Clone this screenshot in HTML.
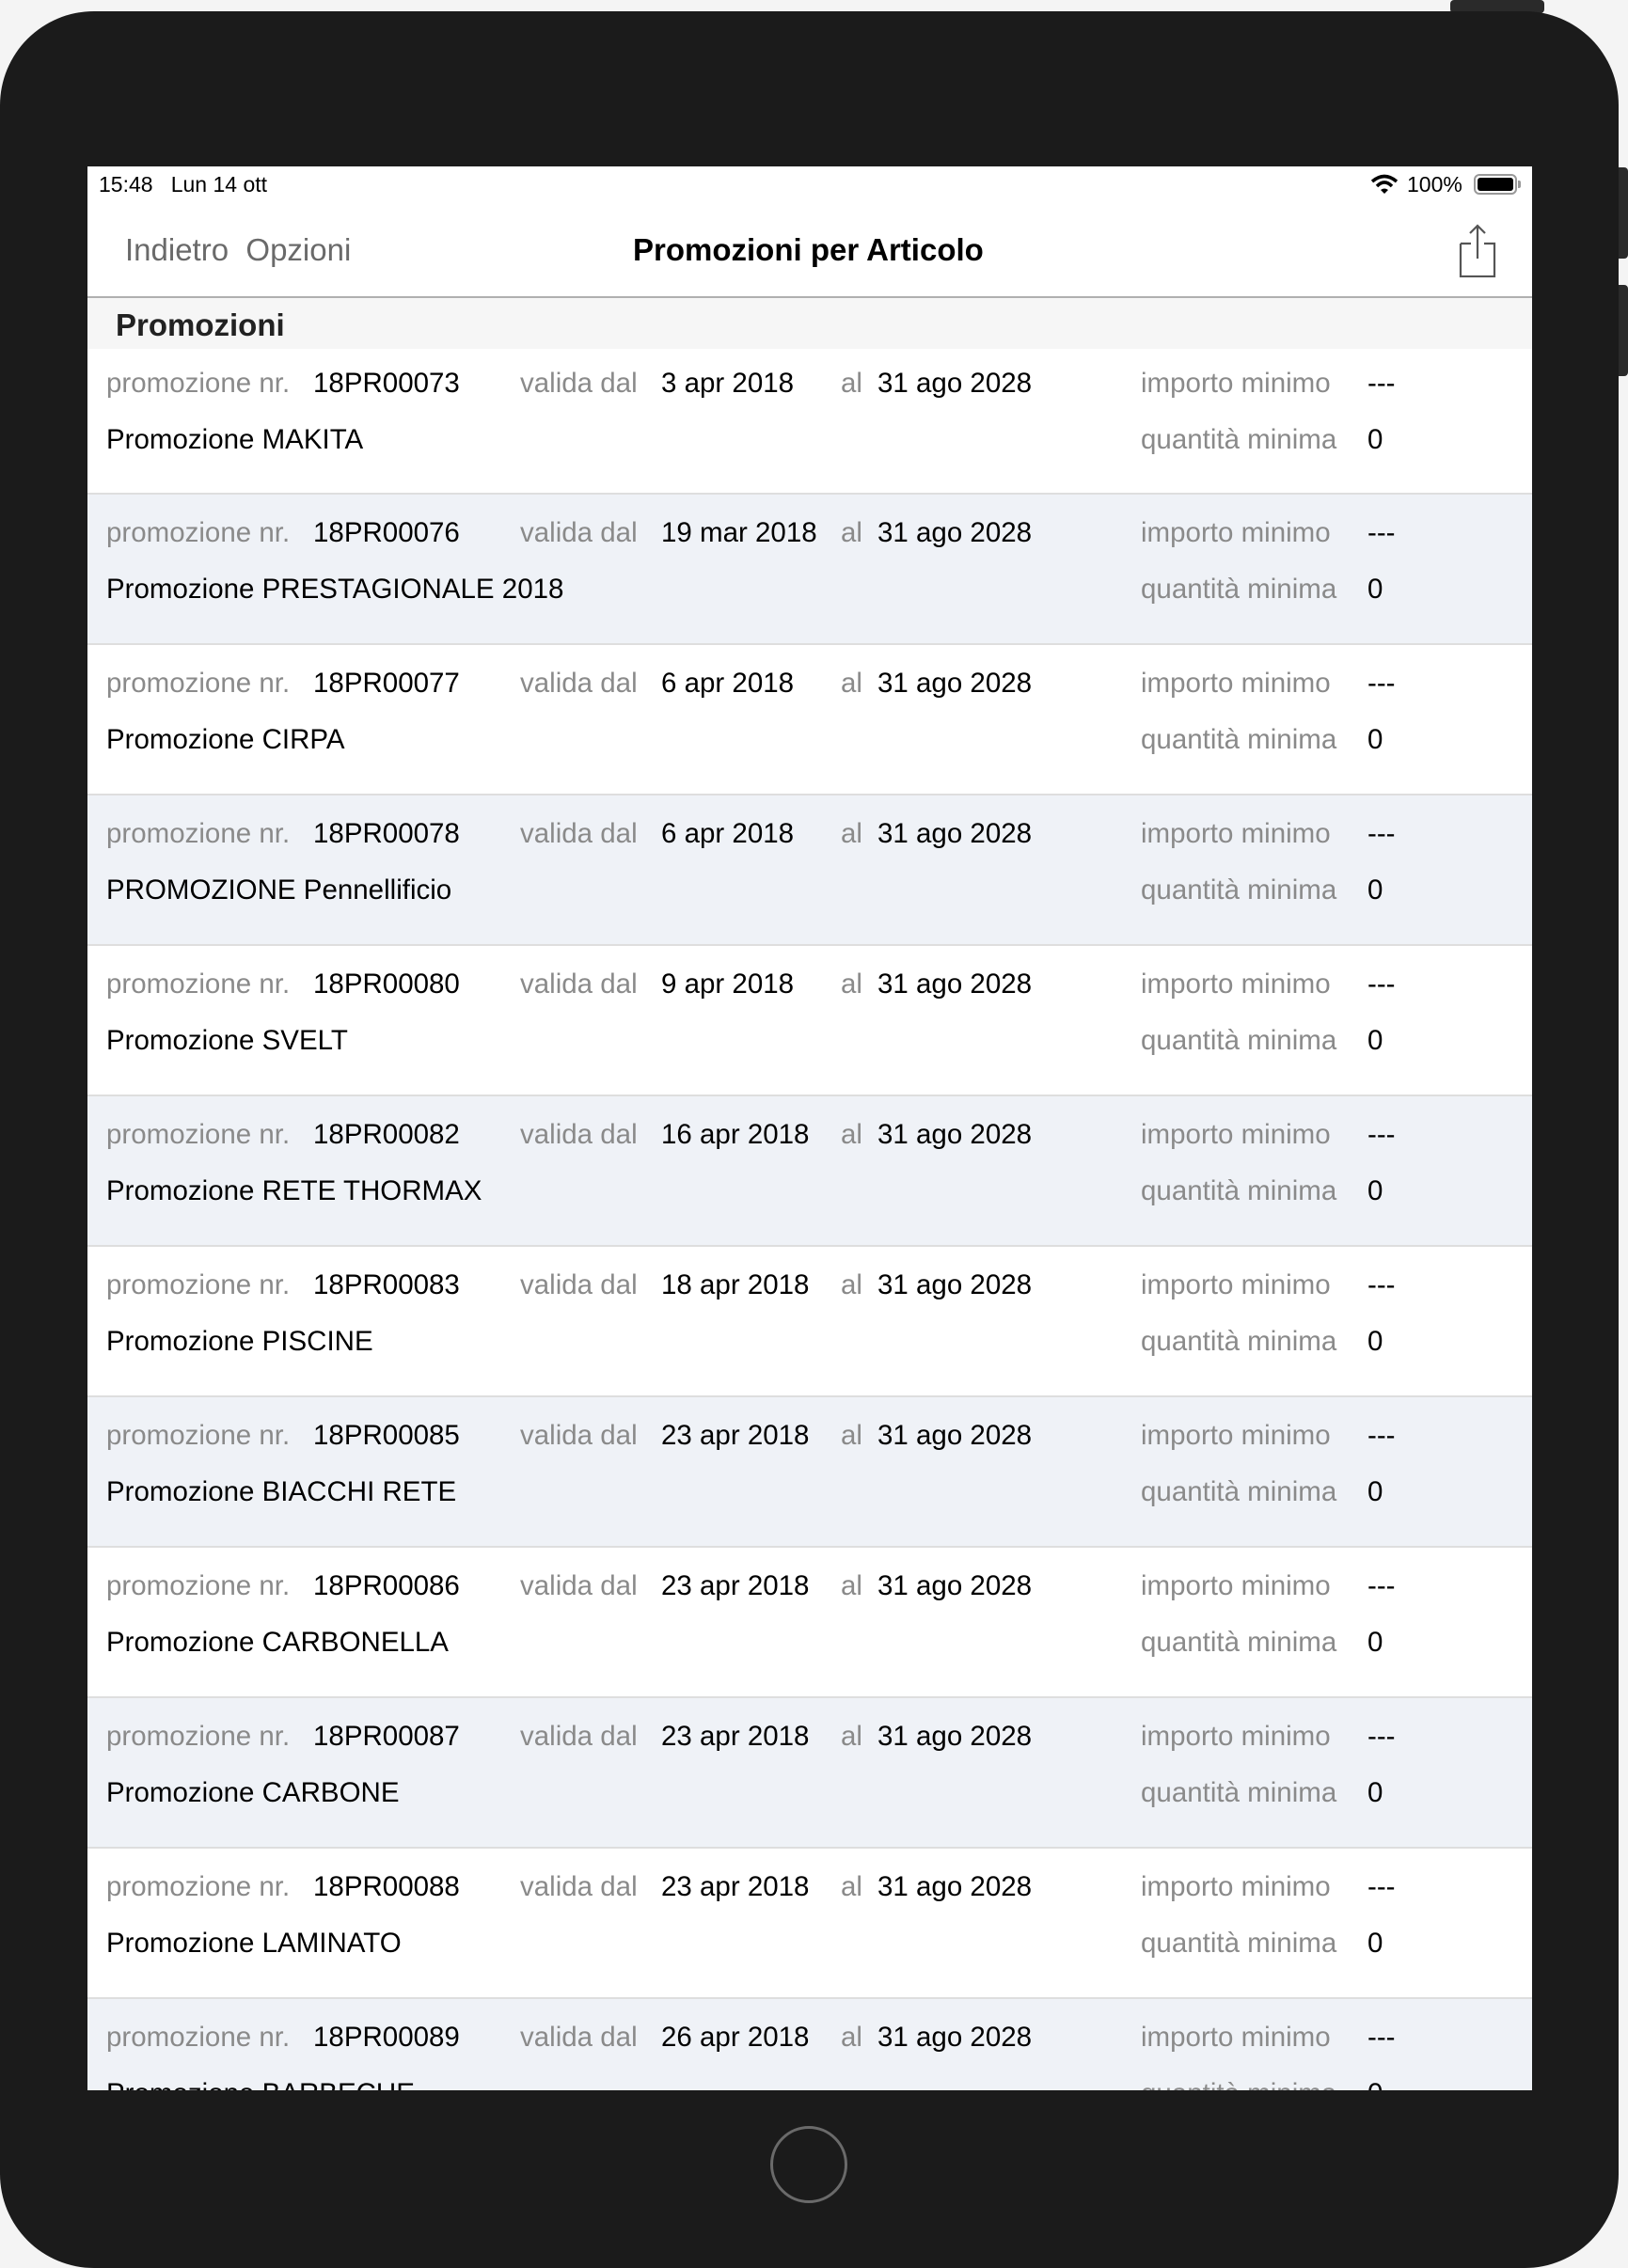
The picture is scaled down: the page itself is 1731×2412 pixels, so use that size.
<!DOCTYPE html>
<html><head><meta charset="utf-8"><style>
*{margin:0;padding:0;box-sizing:border-box}
html,body{width:1731px;height:2388px;overflow:hidden;background:#f4f4f4;font-family:"Liberation Sans",sans-serif}
.dev{position:absolute;left:0;top:12px;width:1721px;height:2400px;background:#1b1b1b;border-radius:100px}
.btn{position:absolute;background:#2a2a2a;border-radius:4px}
.scr{position:absolute;left:93px;top:177px;width:1536px;height:2046px;background:#fff;overflow:hidden}
.a{position:absolute;white-space:nowrap;line-height:1}
.row{position:absolute;left:0;width:1536px;height:160px;border-bottom:2px solid #dedede;background:#fff}
.row.e{background:#eff2f7}
.row.f{height:155px}
.t{font-size:29.5px;position:absolute;white-space:nowrap;line-height:1;color:#000}
.g{color:#8a8a8a}
.l1{top:26px}.l2{top:86px}
.f .l1{top:22px}.f .l2{top:82px}
.c1{left:20px}.c2{left:240px}.c3{left:460px}.c4{left:610px}.c5{left:801px}.c6{left:840px}.c7{left:1120px}.c8{left:1361px}
</style></head><body>
<div class="btn" style="left:1542px;top:0;width:100px;height:14px"></div>
<div class="btn" style="left:1715px;top:178px;width:16px;height:97px"></div>
<div class="btn" style="left:1715px;top:303px;width:16px;height:97px"></div>
<div class="dev"></div>
<div style="position:absolute;left:819px;top:2261px;width:82px;height:82px;border:3px solid #6a6a6a;border-radius:50%"></div>
<div class="scr">
 <div class="a" style="left:12px;top:8px;font-size:23px;color:#000">15:48&nbsp;&nbsp;&nbsp;Lun 14 ott</div>
 <svg style="position:absolute;left:1364px;top:8px" width="30" height="22" viewBox="0 0 30 22"><path d="M2 8 Q15 -3 28 8" stroke="#000" stroke-width="3.5" fill="none"/><path d="M7 13 Q15 5 23 13" stroke="#000" stroke-width="3.5" fill="none"/><path d="M11 17 L15 21 L19 17 Q15 14 11 17Z" fill="#000"/></svg>
 <div class="a" style="left:1403px;top:8px;font-size:23px;color:#000">100%</div>
 <div style="position:absolute;left:1474px;top:8px;width:46px;height:22px;border:2px solid #999;border-radius:6px;padding:2px"><div style="width:100%;height:100%;background:#000;border-radius:3px"></div></div>
 <div style="position:absolute;left:1521px;top:15px;width:3px;height:8px;background:#999;border-radius:0 2px 2px 0"></div>
 <div class="a" style="left:40px;top:72px;font-size:33px;color:#6a6a6a">Indietro&nbsp;&nbsp;Opzioni</div>
 <div class="a" style="left:580px;top:72px;font-size:33px;font-weight:bold;color:#000">Promozioni per Articolo</div>
 <svg style="position:absolute;left:1457px;top:60px" width="42" height="58" viewBox="0 0 42 58"><path d="M3 22 H14 M28 22 H39 V57 H3 V22" stroke="#555" stroke-width="2.2" fill="none"/><path d="M21 3 V38 M13 11 L21 3 L29 11" stroke="#555" stroke-width="2.2" fill="none"/></svg>
 <div style="position:absolute;left:0;top:138px;width:1536px;height:57px;background:#f6f6f6;border-top:2px solid #b0b0b0"></div>
 <div class="a" style="left:30px;top:152px;font-size:33px;font-weight:bold;color:#222">Promozioni</div>

 <div class="row f" style="top:194px"><div class="t g l1 c1">promozione nr.</div><div class="t l1 c2">18PR00073</div><div class="t g l1 c3">valida dal</div><div class="t l1 c4">3 apr 2018</div><div class="t g l1 c5">al</div><div class="t l1 c6">31 ago 2028</div><div class="t g l1 c7">importo minimo</div><div class="t l1 c8">---</div><div class="t l2 c1">Promozione MAKITA</div><div class="t g l2 c7">quantità minima</div><div class="t l2 c8">0</div></div>
 <div class="row e" style="top:349px"><div class="t g l1 c1">promozione nr.</div><div class="t l1 c2">18PR00076</div><div class="t g l1 c3">valida dal</div><div class="t l1 c4">19 mar 2018</div><div class="t g l1 c5">al</div><div class="t l1 c6">31 ago 2028</div><div class="t g l1 c7">importo minimo</div><div class="t l1 c8">---</div><div class="t l2 c1">Promozione PRESTAGIONALE 2018</div><div class="t g l2 c7">quantità minima</div><div class="t l2 c8">0</div></div>
 <div class="row" style="top:509px"><div class="t g l1 c1">promozione nr.</div><div class="t l1 c2">18PR00077</div><div class="t g l1 c3">valida dal</div><div class="t l1 c4">6 apr 2018</div><div class="t g l1 c5">al</div><div class="t l1 c6">31 ago 2028</div><div class="t g l1 c7">importo minimo</div><div class="t l1 c8">---</div><div class="t l2 c1">Promozione CIRPA</div><div class="t g l2 c7">quantità minima</div><div class="t l2 c8">0</div></div>
 <div class="row e" style="top:669px"><div class="t g l1 c1">promozione nr.</div><div class="t l1 c2">18PR00078</div><div class="t g l1 c3">valida dal</div><div class="t l1 c4">6 apr 2018</div><div class="t g l1 c5">al</div><div class="t l1 c6">31 ago 2028</div><div class="t g l1 c7">importo minimo</div><div class="t l1 c8">---</div><div class="t l2 c1">PROMOZIONE Pennellificio</div><div class="t g l2 c7">quantità minima</div><div class="t l2 c8">0</div></div>
 <div class="row" style="top:829px"><div class="t g l1 c1">promozione nr.</div><div class="t l1 c2">18PR00080</div><div class="t g l1 c3">valida dal</div><div class="t l1 c4">9 apr 2018</div><div class="t g l1 c5">al</div><div class="t l1 c6">31 ago 2028</div><div class="t g l1 c7">importo minimo</div><div class="t l1 c8">---</div><div class="t l2 c1">Promozione SVELT</div><div class="t g l2 c7">quantità minima</div><div class="t l2 c8">0</div></div>
 <div class="row e" style="top:989px"><div class="t g l1 c1">promozione nr.</div><div class="t l1 c2">18PR00082</div><div class="t g l1 c3">valida dal</div><div class="t l1 c4">16 apr 2018</div><div class="t g l1 c5">al</div><div class="t l1 c6">31 ago 2028</div><div class="t g l1 c7">importo minimo</div><div class="t l1 c8">---</div><div class="t l2 c1">Promozione RETE THORMAX</div><div class="t g l2 c7">quantità minima</div><div class="t l2 c8">0</div></div>
 <div class="row" style="top:1149px"><div class="t g l1 c1">promozione nr.</div><div class="t l1 c2">18PR00083</div><div class="t g l1 c3">valida dal</div><div class="t l1 c4">18 apr 2018</div><div class="t g l1 c5">al</div><div class="t l1 c6">31 ago 2028</div><div class="t g l1 c7">importo minimo</div><div class="t l1 c8">---</div><div class="t l2 c1">Promozione PISCINE</div><div class="t g l2 c7">quantità minima</div><div class="t l2 c8">0</div></div>
 <div class="row e" style="top:1309px"><div class="t g l1 c1">promozione nr.</div><div class="t l1 c2">18PR00085</div><div class="t g l1 c3">valida dal</div><div class="t l1 c4">23 apr 2018</div><div class="t g l1 c5">al</div><div class="t l1 c6">31 ago 2028</div><div class="t g l1 c7">importo minimo</div><div class="t l1 c8">---</div><div class="t l2 c1">Promozione BIACCHI RETE</div><div class="t g l2 c7">quantità minima</div><div class="t l2 c8">0</div></div>
 <div class="row" style="top:1469px"><div class="t g l1 c1">promozione nr.</div><div class="t l1 c2">18PR00086</div><div class="t g l1 c3">valida dal</div><div class="t l1 c4">23 apr 2018</div><div class="t g l1 c5">al</div><div class="t l1 c6">31 ago 2028</div><div class="t g l1 c7">importo minimo</div><div class="t l1 c8">---</div><div class="t l2 c1">Promozione CARBONELLA</div><div class="t g l2 c7">quantità minima</div><div class="t l2 c8">0</div></div>
 <div class="row e" style="top:1629px"><div class="t g l1 c1">promozione nr.</div><div class="t l1 c2">18PR00087</div><div class="t g l1 c3">valida dal</div><div class="t l1 c4">23 apr 2018</div><div class="t g l1 c5">al</div><div class="t l1 c6">31 ago 2028</div><div class="t g l1 c7">importo minimo</div><div class="t l1 c8">---</div><div class="t l2 c1">Promozione CARBONE</div><div class="t g l2 c7">quantità minima</div><div class="t l2 c8">0</div></div>
 <div class="row" style="top:1789px"><div class="t g l1 c1">promozione nr.</div><div class="t l1 c2">18PR00088</div><div class="t g l1 c3">valida dal</div><div class="t l1 c4">23 apr 2018</div><div class="t g l1 c5">al</div><div class="t l1 c6">31 ago 2028</div><div class="t g l1 c7">importo minimo</div><div class="t l1 c8">---</div><div class="t l2 c1">Promozione LAMINATO</div><div class="t g l2 c7">quantità minima</div><div class="t l2 c8">0</div></div>
 <div class="row e" style="top:1949px"><div class="t g l1 c1">promozione nr.</div><div class="t l1 c2">18PR00089</div><div class="t g l1 c3">valida dal</div><div class="t l1 c4">26 apr 2018</div><div class="t g l1 c5">al</div><div class="t l1 c6">31 ago 2028</div><div class="t g l1 c7">importo minimo</div><div class="t l1 c8">---</div><div class="t l2 c1">Promozione BARBECUE</div><div class="t g l2 c7">quantità minima</div><div class="t l2 c8">0</div></div>
</div>
</body></html>
